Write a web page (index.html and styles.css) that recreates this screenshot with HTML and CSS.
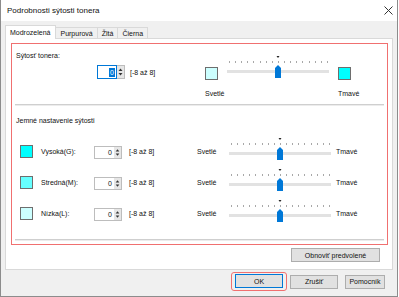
FILE: index.html
```html
<!DOCTYPE html>
<html lang="sk">
<head>
  <meta charset="UTF-8">
  <title>Podrobnosti sýtosti tonera</title>
  <link rel="stylesheet" href="styles.css">
</head>
<body>
<svg class="defs" width="0" height="0">
  <symbol id="slider" viewBox="0 0 108 23">
    <path d="M51.5 0h3l-1.5 2z" fill="#222"/>
    <path d="M4.5 5v2M10.5 5v2M16.5 5v2M22.5 5v2M28.5 5v2M35.5 5v2M41.5 5v2M47.5 5v2M53.5 5v2M59.5 5v2M65.5 5v2M71.5 5v2M77.5 5v2M84.5 5v2M90.5 5v2M96.5 5v2M102.5 5v2" stroke="#a8a8a8"/>
    <rect x="2" y="14" width="102" height="3" fill="#e2e2e2"/>
    <path d="M50 12l3-3 3 3v10h-6z" fill="#0078d7"/>
  </symbol>
  <symbol id="arrows" viewBox="0 0 7 12">
    <path d="M1.5 5h4L3.5 2.5z" fill="#333"/>
    <path d="M1.5 7h4L3.5 9.5z" fill="#333"/>
  </symbol>
</svg>

<div class="window">
  <div class="titlebar">
    <span class="title">Podrobnosti sýtosti tonera</span>
    <svg class="close" viewBox="0 0 9 9"><path d="M0.5 0.5l8 8M8.5 0.5l-8 8" stroke="#333" stroke-width="1"/></svg>
  </div>

  <div class="client">
    <div class="tabs">
      <div class="tab active">Modrozelená</div>
      <div class="tab">Purpurová</div>
      <div class="tab">Žltá</div>
      <div class="tab">Čierna</div>
    </div>

    <div class="panel">
      <div class="marked">
        <div class="group main">
          <div class="main-left">
            <div class="caption">Sýtosť tonera:</div>
            <div class="spin-line">
              <span class="spin focus">
                <span class="spin-value"><span class="sel">0</span></span>
                <span class="spin-btns"><svg><use href="#arrows"/></svg></span>
              </span>
              <span class="range">[-8 až 8]</span>
            </div>
          </div>
          <div class="scale">
            <span class="swatch light"></span>
            <svg class="slider"><use href="#slider"/></svg>
            <span class="swatch full"></span>
            <span class="scale-label">Svetlé</span>
            <span></span>
            <span class="scale-label">Tmavé</span>
          </div>
        </div>

        <div class="rule"></div>

        <div class="group fine">
          <div class="caption">Jemné nastavenie sýtosti</div>

          <div class="row">
            <span class="swatch full"></span>
            <span class="row-label">Vysoká(G):</span>
            <span class="spin">
              <span class="spin-value">0</span>
              <span class="spin-btns"><svg><use href="#arrows"/></svg></span>
            </span>
            <span class="row-range">[-8 až 8]</span>
            <span class="row-light">Svetlé</span>
            <svg class="slider"><use href="#slider"/></svg>
            <span class="row-dark">Tmavé</span>
          </div>

          <div class="row">
            <span class="swatch mid"></span>
            <span class="row-label">Stredná(M):</span>
            <span class="spin">
              <span class="spin-value">0</span>
              <span class="spin-btns"><svg><use href="#arrows"/></svg></span>
            </span>
            <span class="row-range">[-8 až 8]</span>
            <span class="row-light">Svetlé</span>
            <svg class="slider"><use href="#slider"/></svg>
            <span class="row-dark">Tmavé</span>
          </div>

          <div class="row">
            <span class="swatch light"></span>
            <span class="row-label">Nízka(L):</span>
            <span class="spin">
              <span class="spin-value">0</span>
              <span class="spin-btns"><svg><use href="#arrows"/></svg></span>
            </span>
            <span class="row-range">[-8 až 8]</span>
            <span class="row-light">Svetlé</span>
            <svg class="slider"><use href="#slider"/></svg>
            <span class="row-dark">Tmavé</span>
          </div>
        </div>

        <div class="rule"></div>
      </div>

      <div class="panel-foot">
        <button class="btn reset">Obnoviť predvolené</button>
      </div>
    </div>

    <div class="actions">
      <span class="ok-mark"><button class="btn ok">OK</button></span>
      <button class="btn cancel">Zrušiť</button>
      <button class="btn help">Pomocník</button>
    </div>
  </div>
</div>
</body>
</html>
```

FILE: styles.css
```css
body {
  margin: 0;
  font-family: "Liberation Sans", Arial, sans-serif;
  font-size: 7px;
  color: #111;
  background: #fff;
}

.defs {
  position: absolute;
}

.window {
  width: 398px;
  height: 297px;
  box-sizing: border-box;
  border: 1px solid #8c8c8c;
  border-top: none;
  display: flex;
  flex-direction: column;
  background: #f0f0f0;
}

.titlebar {
  height: 21px;
  flex-shrink: 0;
  background: #fff;
  display: flex;
  align-items: center;
  padding: 0 4px 0 6px;
}

.title {
  flex: 1;
  font-size: 8px;
}

.close {
  width: 9px;
  height: 9px;
}

.client {
  flex: 1;
  padding: 4px 4px 0 4px;
  display: flex;
  flex-direction: column;
}

/* tabs */
.tabs {
  display: flex;
  align-items: flex-end;
  height: 13px;
  padding-left: 1px;
}

.tab {
  height: 11px;
  line-height: 11px;
  box-sizing: border-box;
  padding: 0 4px;
  border: 1px solid #d9d9d9;
  border-bottom: none;
  margin-left: -1px;
  background: #f0f0f0;
}

.tab.active {
  height: 14px;
  line-height: 13px;
  padding: 0 5px 0 4px;
  margin-bottom: -1px;
  background: #fff;
  position: relative;
  z-index: 1;
}

.panel {
  height: 232px;
  box-sizing: border-box;
  background: #fff;
  border: 1px solid #d9d9d9;
  padding: 4px 4px 0 5px;
}

.marked {
  border: 1px solid #f07070;
  padding: 0 3px 3px 3px;
}

.rule {
  height: 1px;
  border-top: 1px solid #cfcfcf;
  background: #ececec;
}

.caption {
  line-height: 10px;
  height: 10px;
  white-space: nowrap;
}

/* top group */
.group.main {
  height: 60px;
  box-sizing: border-box;
  padding: 7px 0 0 1px;
  display: flex;
}

.main-left {
  width: 189px;
}

.spin-line {
  display: flex;
  align-items: center;
  margin: 4px 0 0 81px;
}

.range {
  margin-left: 5px;
}

.scale {
  margin-top: 5px;
  display: grid;
  grid-template-columns: 20px 113px auto;
  align-items: start;
}

.scale .swatch {
  margin-top: 11px;
}

.scale-label {
  margin-top: 4px;
  line-height: 10px;
  white-space: nowrap;
}

.scale-label:first-of-type {
  margin-left: -1px;
}

/* spin box */
.spin {
  display: inline-flex;
  height: 13px;
  box-sizing: border-box;
  border: 1px solid #bdbdbd;
  background: #fff;
}

.spin.focus {
  height: 14px;
}

.spin-value {
  width: 19px;
  box-sizing: border-box;
  text-align: right;
  padding-right: 2px;
  line-height: 11px;
  display: flex;
  justify-content: flex-end;
  align-items: center;
}

.focus .spin-value {
  border: 1px solid #0078d7;
  margin: -1px 0 -1px -1px;
  width: 20px;
  padding-right: 1px;
}

.sel {
  background: #0078d7;
  color: #fff;
  line-height: 9px;
  padding: 0 1px;
}

.spin-btns {
  width: 7px;
  background: #e6e6e6;
  display: flex;
}

.spin-btns svg {
  width: 7px;
  height: 100%;
}

.swatch {
  display: block;
  width: 13px;
  height: 13px;
  box-sizing: border-box;
  border: 1px solid #6e6e6e;
}

.swatch.light { background: #ccffff; }
.swatch.mid { background: #66ffff; }
.swatch.full { background: #00ffff; }

.slider {
  display: block;
  width: 108px;
  height: 23px;
}

/* fine tuning rows */
.group.fine {
  height: 133px;
  box-sizing: border-box;
  padding: 10px 0 0 1px;
}

.group.fine .caption {
  margin-bottom: 12px;
}

.row {
  display: flex;
  align-items: flex-start;
  height: 31px;
  margin-left: -1px;
}

.row .swatch {
  margin: 7px 0 0 5px;
}

.row-label {
  margin: 9px 0 0 8px;
  width: 53px;
  line-height: 10px;
}

.row .spin {
  margin-top: 8px;
}

.row-range {
  margin: 9px 0 0 7px;
  width: 68px;
  line-height: 10px;
}

.row-light {
  width: 30px;
  margin-top: 9px;
  line-height: 10px;
}

.row-dark {
  margin: 9px 0 0 1px;
  line-height: 10px;
}

/* buttons */
.btn {
  font-family: inherit;
  font-size: 7px;
  color: #111;
  height: 14px;
  padding: 0;
  background: #e1e1e1;
  border: 1px solid #adadad;
}

.panel-foot {
  display: flex;
  justify-content: flex-end;
  padding: 3px 8px 0 0;
}

.reset {
  width: 89px;
}

.actions {
  display: flex;
  justify-content: flex-end;
  align-items: center;
  margin-top: 2px;
  padding-right: 8px;
}

.ok-mark {
  display: flex;
  padding: 1px 3px 2px 3px;
  border: 1px solid #f07070;
  border-radius: 3px;
}

.ok {
  width: 48px;
  border-color: #0078d7;
}

.cancel {
  width: 48px;
  margin-left: 3px;
}

.help {
  width: 40px;
  margin-left: 7px;
}
```
